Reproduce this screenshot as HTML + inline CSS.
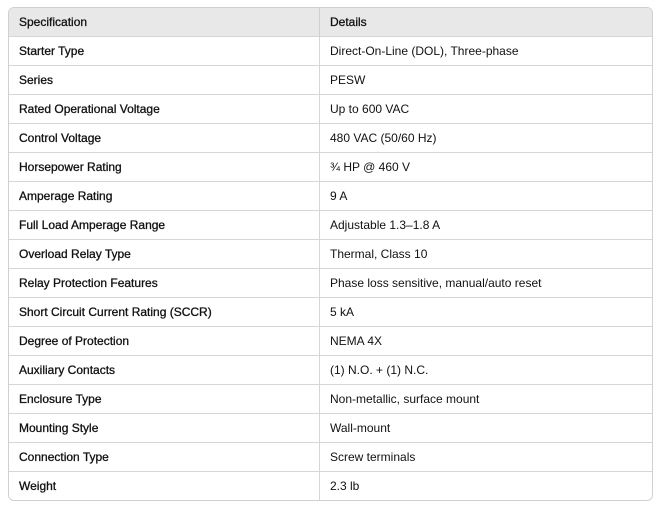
<!DOCTYPE html><html><head><style>
body{margin:0;background:#fff;font-family:"Liberation Sans",sans-serif;font-size:12px;color:#111;}
.t{position:absolute;left:8px;top:7px;width:643px;border:1px solid #d0d0d0;border-radius:6px;overflow:hidden;}
table{border-collapse:collapse;width:100%;}
td,th{height:28px;padding:0 0 0 10px;text-align:left;border-top:1px solid #d6d6d6;font-weight:normal;}
tr:first-child th{border-top:none;background:#e8e8e8;height:28px;-webkit-text-stroke:0.3px #111;}
td:first-child{width:300px;border-right:1px solid #d6d6d6;-webkit-text-stroke:0.3px #111;}
th:first-child{border-right:1px solid #d0d0d0;}
</style></head><body><div class="t"><table>
<tr><th>Specification</th><th>Details</th></tr>
<tr><td>Starter Type</td><td>Direct-On-Line (DOL), Three-phase</td></tr>
<tr><td>Series</td><td>PESW</td></tr>
<tr><td>Rated Operational Voltage</td><td>Up to 600 VAC</td></tr>
<tr><td>Control Voltage</td><td>480 VAC (50/60 Hz)</td></tr>
<tr><td>Horsepower Rating</td><td>¾ HP @ 460 V</td></tr>
<tr><td>Amperage Rating</td><td>9 A</td></tr>
<tr><td>Full Load Amperage Range</td><td>Adjustable 1.3–1.8 A</td></tr>
<tr><td>Overload Relay Type</td><td>Thermal, Class 10</td></tr>
<tr><td>Relay Protection Features</td><td>Phase loss sensitive, manual/auto reset</td></tr>
<tr><td>Short Circuit Current Rating (SCCR)</td><td>5 kA</td></tr>
<tr><td>Degree of Protection</td><td>NEMA 4X</td></tr>
<tr><td>Auxiliary Contacts</td><td>(1) N.O. + (1) N.C.</td></tr>
<tr><td>Enclosure Type</td><td>Non-metallic, surface mount</td></tr>
<tr><td>Mounting Style</td><td>Wall-mount</td></tr>
<tr><td>Connection Type</td><td>Screw terminals</td></tr>
<tr><td>Weight</td><td>2.3 lb</td></tr>
</table></div></body></html>
